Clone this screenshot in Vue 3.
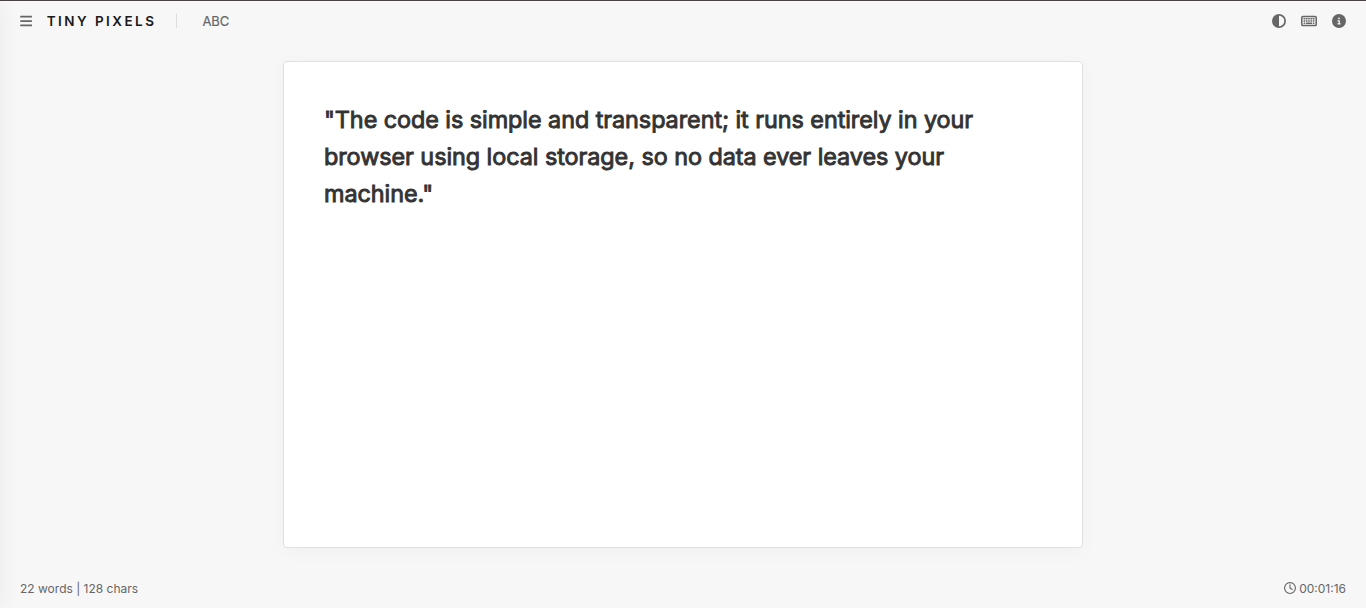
<template>
  <div class="app">
    <aside class="sidebar"></aside>

    <header class="top-bar">
      <div class="top-left">
        <button class="icon-btn menu-btn" aria-label="Menu">
          <svg class="icon-bars" viewBox="0 0 448 512">
            <path d="M0 96C0 78.300 14.300 64 32 64h384c17.700 0 32 14.300 32 32s-14.300 32-32 32H32C14.300 128 0 113.700 0 96zm0 160c0-17.700 14.300-32 32-32h384c17.700 0 32 14.300 32 32s-14.300 32-32 32H32c-17.700 0-32-14.300-32-32zm448 160c0 17.700-14.300 32-32 32H32c-17.700 0-32-14.300-32-32s14.300-32 32-32h384c17.700 0 32 14.300 32 32z" />
          </svg>
        </button>
        <span class="brand">TINY PIXELS</span>
        <span class="divider"></span>
        <span class="doc-title">{{ docTitle }}</span>
      </div>

      <div class="top-right">
        <button class="icon-btn" aria-label="Theme">
          <svg class="icon" viewBox="0 0 512 512">
            <path d="M448 256c0-106-86-192-192-192v384c106 0 192-86 192-192zM0 256a256 256 0 1 1 512 0A256 256 0 1 1 0 256z" />
          </svg>
        </button>
        <button class="icon-btn" aria-label="Shortcuts">
          <svg class="icon-keyboard" viewBox="0 0 576 512">
            <rect class="keyboard-frame" x="24" y="88" width="528" height="336" rx="40" />
            <rect v-for="x in keyColumns" :key="'a' + x" :x="x" y="144" width="56" height="56" rx="8" />
            <rect v-for="x in keyColumns" :key="'b' + x" :x="x" y="228" width="56" height="56" rx="8" />
            <rect x="92" y="312" width="56" height="56" rx="8" />
            <rect x="176" y="312" width="224" height="56" rx="8" />
            <rect x="428" y="312" width="56" height="56" rx="8" />
          </svg>
        </button>
        <button class="icon-btn" aria-label="About">
          <svg class="icon" viewBox="0 0 512 512">
            <path d="M256 512A256 256 0 1 0 256 0a256 256 0 1 0 0 512zM216 336h24v-64h-24c-13.300 0-24-10.700-24-24s10.700-24 24-24h48c13.300 0 24 10.700 24 24v88h8c13.300 0 24 10.700 24 24s-10.700 24-24 24h-80c-13.300 0-24-10.700-24-24s10.700-24 24-24zm40-208a32 32 0 1 1 0 64 32 32 0 1 1 0-64z" />
          </svg>
        </button>
      </div>
    </header>

    <main class="workspace">
      <div class="editor" contenteditable="true" spellcheck="false">
        <h2>{{ content }}</h2>
      </div>
    </main>

    <footer class="status-bar">
      <span>{{ wordCount }} words | {{ charCount }} chars</span>
      <span class="timer">
        <svg class="icon-clock" viewBox="0 0 512 512">
          <path d="M464 256A208 208 0 1 1 48 256a208 208 0 1 1 416 0zM0 256a256 256 0 1 0 512 0A256 256 0 1 0 0 256zM232 120v136c0 8 4 15.500 10.700 20l96 64c11 7.400 25.900 4.400 33.300-6.700s4.400-25.900-6.700-33.300L280 243.200V120c0-13.300-10.700-24-24-24s-24 10.700-24 24z" />
        </svg>
        {{ elapsed }}
      </span>
    </footer>
  </div>
</template>

<script setup>
import { ref } from 'vue'

const docTitle = ref('ABC')
const content = ref('"The code is simple and transparent; it runs entirely in your browser using local storage, so no data ever leaves your machine."')
const wordCount = ref(22)
const charCount = ref(128)
const elapsed = ref('00:01:16')

// x positions of the keys in one keyboard row
const keyColumns = [92, 176, 260, 344, 428]
</script>

<style>
body {
  margin: 0;
  background-color: #f7f7f7;
}
</style>

<style scoped>
.app {
  display: flex;
  flex-direction: column;
  height: 100vh;
  box-sizing: border-box;
  border-top: 1px solid #464246;
  overflow: hidden;
  position: relative;
  font-family: Inter, 'Liberation Sans', sans-serif;
  color: #666;
}
/* closed panel, only its shadow reaches the page */
.sidebar {
  position: absolute;
  top: 0;
  bottom: 0;
  left: -280px;
  width: 280px;
  box-shadow: 2px 0 20px rgba(0, 0, 0, 0.05);
}
.top-bar {
  display: flex;
  justify-content: space-between;
  align-items: center;
  height: 40px;
  padding: 0 20px;
}
.top-left {
  display: flex;
  align-items: center;
}
.top-right {
  display: flex;
  align-items: center;
  gap: 15px;
}
.icon-btn {
  display: flex;
  padding: 0;
  border: none;
  background: none;
  color: #666;
  cursor: pointer;
}
svg {
  display: block;
  fill: currentColor;
}
.icon {
  width: 14px;
  height: 14px;
}
.icon-bars {
  width: 12.25px;
  height: 14px;
}
.icon-keyboard {
  width: 16px;
  height: 14px;
}
.keyboard-frame {
  fill: none;
  stroke: currentColor;
  stroke-width: 56;
}
.brand {
  margin-left: 14.5px;
  font-size: 13.5px;
  font-weight: 600;
  letter-spacing: 2.45px;
  color: #1a1a1a;
}
.divider {
  width: 1px;
  height: 14px;
  margin: 0 25px 0 20px;
  background-color: #ddd;
}
.doc-title {
  font-size: 13px;
  -webkit-text-stroke: 0.2px #666;
}
.workspace {
  flex: 1;
  display: flex;
  justify-content: center;
  padding: 20px;
}
.editor {
  width: 800px;
  box-sizing: border-box;
  padding: 40px;
  background-color: #fff;
  border: 1px solid #e0e0e0;
  border-radius: 4px;
  box-shadow: 0 4px 20px rgba(0, 0, 0, 0.03);
  outline: none;
}
.editor h2 {
  margin: -1px 0 0;
  font-size: 23.4px;
  font-weight: 400;
  line-height: 37.2px;
  letter-spacing: -0.06px;
  color: #333;
  -webkit-text-stroke: 0.9px #333;
}
.status-bar {
  display: flex;
  justify-content: space-between;
  align-items: center;
  height: 40px;
  padding: 0 20px;
  font-size: 12px;
}
.timer {
  display: flex;
  align-items: center;
  gap: 3px;
}
.icon-clock {
  width: 12px;
  height: 12px;
}
</style>
